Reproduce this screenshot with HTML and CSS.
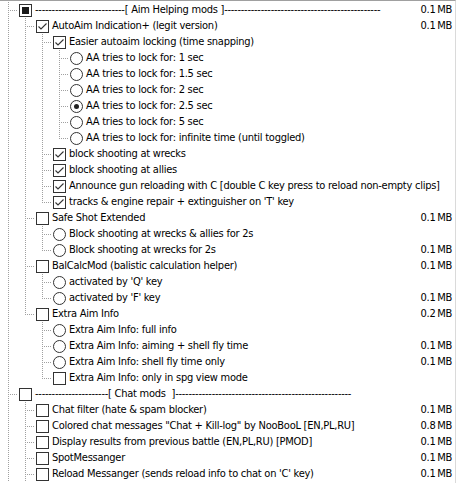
FILE: index.html
```html
<!DOCTYPE html>
<html lang="en">
<head>
    <meta charset="UTF-8">
    <meta name="viewport" content="width=device-width, initial-scale=1.0">
    <title>Select Components</title>
    <link rel="stylesheet" href="styles.css">
</head>
<body>
    <div class="tree" id="tree"></div>
    <script>
        // [level, type (c = checkbox, r = radio), state (0 off, 1 on, 2 partial), text, size]
        let components = [
            [0, "c", 2, "---------------------------[ Aim Helping mods ]-----------------------------------------------", "0.1 MB"],
            [1, "c", 1, "AutoAim Indication+ (legit version)", "0.1 MB"],
            [2, "c", 1, "Easier autoaim locking (time snapping)", ""],
            [3, "r", 0, "AA tries to lock for: 1 sec", ""],
            [3, "r", 0, "AA tries to lock for: 1.5 sec", ""],
            [3, "r", 0, "AA tries to lock for: 2 sec", ""],
            [3, "r", 1, "AA tries to lock for: 2.5 sec", ""],
            [3, "r", 0, "AA tries to lock for: 5 sec", ""],
            [3, "r", 0, "AA tries to lock for: infinite time (until toggled)", ""],
            [2, "c", 1, "block shooting at wrecks", ""],
            [2, "c", 1, "block shooting at allies", ""],
            [2, "c", 1, "Announce gun reloading with C [double C key press to reload non-empty clips]", ""],
            [2, "c", 1, "tracks & engine repair + extinguisher on 'T' key", ""],
            [1, "c", 0, "Safe Shot Extended", "0.1 MB"],
            [2, "r", 0, "Block shooting at wrecks & allies for 2s", ""],
            [2, "r", 0, "Block shooting at wrecks for 2s", "0.1 MB"],
            [1, "c", 0, "BalCalcMod (balistic calculation helper)", "0.1 MB"],
            [2, "r", 0, "activated by 'Q' key", ""],
            [2, "r", 0, "activated by 'F' key", "0.1 MB"],
            [1, "c", 0, "Extra Aim Info", "0.2 MB"],
            [2, "r", 0, "Extra Aim Info: full info", ""],
            [2, "r", 0, "Extra Aim Info: aiming + shell fly time", "0.1 MB"],
            [2, "r", 0, "Extra Aim Info: shell fly time only", "0.1 MB"],
            [2, "c", 0, "Extra Aim Info: only in spg view mode", ""],
            [0, "c", 0, "----------------------[ Chat mods&nbsp; ]-----------------------------------------------------", ""],
            [1, "c", 0, "Chat filter (hate & spam blocker)", "0.1 MB"],
            [1, "c", 0, "Colored chat messages \"Chat + Kill-log\" by NooBooL [EN,PL,RU]", "0.8 MB"],
            [1, "c", 0, "Display results from previous battle (EN,PL,RU) [PMOD]", "0.1 MB"],
            [1, "c", 0, "SpotMessanger", "0.1 MB"],
            [1, "c", 0, "Reload Messanger (sends reload info to chat on 'C' key)", "0.1 MB"]
        ];

        const tick = `<svg width="11" height="11" viewBox="0 0 11 11"><polyline points="1.5,5.5 4,8 9.5,2.5" fill="none" stroke="#333" stroke-width="1.1"/></svg>`;

        function buildTree() {
            let tree = document.getElementById("tree");
            let open = [];
            let html = "";
            components.forEach((item, i) => {
                let [level, type, state, text, size] = item;
                // a sibling further down keeps the branch line going
                let hasNext = true;
                for (let j = i + 1; j < components.length; j++) {
                    if (components[j][0] < level) { hasNext = false; break; }
                    if (components[j][0] == level) break;
                }
                open[level] = hasNext;

                let guides = "";
                for (let k = 0; k < level; k++) {
                    guides += `<span class="guide${open[k] ? " pass" : ""}"></span>`;
                }
                guides += `<span class="guide ${hasNext ? "tee" : "end"}"></span>`;

                let inner = "";
                if (type == "c" && state == 1) inner = tick;
                if (type == "c" && state == 2) inner = `<span class="partial"></span>`;
                if (type == "r" && state == 1) inner = `<span class="dot"></span>`;
                let box = `<span class="box ${type == "r" ? "radio" : "check"}">${inner}</span>`;

                html += `<div class="row">${guides}${box}
                    <span class="label">${text.replace(/&(?!nbsp;)/g, "&amp;")}</span>
                    <span class="size">${size.replace(" ", "&thinsp;")}</span>
                </div>`;
            });
            tree.innerHTML = html;
        }
        buildTree();
    </script>
</body>
</html>
```

FILE: styles.css
```css
body {
    margin: 0;
    background-color: white;
}
.tree {
    box-sizing: border-box;
    width: 456px;
    height: 483px;
    overflow: hidden;
    border-top: 1px solid #a0a0a0;
    border-right: 1px solid #dadada;
    padding-top: 1px;
    font-family: "DejaVu Sans Condensed", "DejaVu Sans", sans-serif;
    font-stretch: condensed;
    font-size: 11px;
    letter-spacing: -0.25px;
    color: #000;
}
.row {
    display: flex;
    align-items: flex-start;
    height: 16px;
    white-space: nowrap;
}
.guide {
    flex: none;
    width: 17px;
    height: 16px;
}
.pass {
    background: repeating-linear-gradient(to bottom, #a0a0a0 0 1px, transparent 1px 2px) 8px 0 / 1px 16px no-repeat;
}
.tee {
    background:
        repeating-linear-gradient(to bottom, #a0a0a0 0 1px, transparent 1px 2px) 8px 0 / 1px 16px no-repeat,
        repeating-linear-gradient(to right, #a0a0a0 0 1px, transparent 1px 2px) 10px 8px / 8px 1px no-repeat;
}
.end {
    background:
        repeating-linear-gradient(to bottom, #a0a0a0 0 1px, transparent 1px 2px) 8px 0 / 1px 9px no-repeat,
        repeating-linear-gradient(to right, #a0a0a0 0 1px, transparent 1px 2px) 10px 8px / 8px 1px no-repeat;
}
.box {
    flex: none;
    box-sizing: border-box;
    width: 13px;
    height: 13px;
    margin: 2px 3px 0 2px;
    border: 1px solid #333;
    background: white;
    display: flex;
    align-items: center;
    justify-content: center;
}
.box svg {
    display: block;
}
.radio {
    border-radius: 50%;
}
.partial {
    width: 7px;
    height: 7px;
    background: #1a1a1a;
}
.dot {
    width: 5px;
    height: 5px;
    border-radius: 50%;
    background: #222;
}
.label {
    line-height: 16px;
}
.size {
    margin-left: auto;
    padding: 0 3px 0 8px;
    line-height: 16px;
}
```
